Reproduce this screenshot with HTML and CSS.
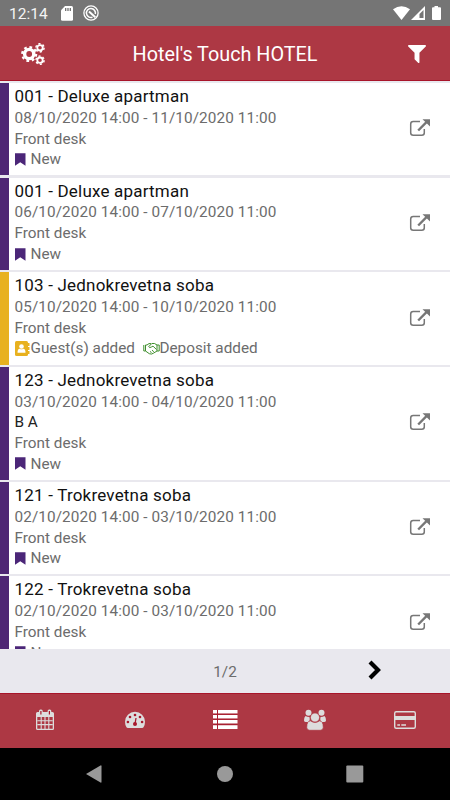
FILE: index.html
```html
<!DOCTYPE html>
<html lang="en">
<head>
<meta charset="utf-8">
<title>Hotel's Touch HOTEL</title>
<link rel="stylesheet" href="styles.css">
</head>
<body>
<svg class="defs" aria-hidden="true">
  <symbol id="open" viewBox="0 0 22 20">
    <path d="M11 3.500H4.200Q1.700 3.500 1.700 6v8.800q0 2.500 2.500 2.500h8.600q2.500 0 2.500-2.500V11" fill="none" stroke="#777" stroke-width="1.500"/>
    <path d="M9.200 12.500L17.500 4.200" stroke="#777" stroke-width="2.400"/>
    <path d="M13.500 1.300H21v7.200z" fill="#777"/>
  </symbol>
  <symbol id="bookmark" viewBox="0 0 11 13"><path d="M0 .2h10.500v12.600L5.250 9.300 0 12.800z" fill="#4b2678"/></symbol>
  <symbol id="guest" viewBox="0 0 15 15">
    <rect width="13" height="15" rx="1.500" fill="#e8b11f"/>
    <path d="M13 2h1.500v3H13zM13 6h1.500v3H13zM13 10h1.500v3H13z" fill="#e8b11f"/>
    <circle cx="6.500" cy="5.500" r="2.300" fill="#fff"/><path d="M2.500 11.700q0-4 2.300-4 1.700 1.200 3.400 0 2.300 0 2.300 4z" fill="#fff"/>
  </symbol>
  <symbol id="hands" viewBox="0 0 17 13">
    <path d="M.8 3v6h1.700l3.800 2.700q2.300 1 4.300-.6L14 9h2.200V3H14l-2.500-1.500H8.800L5.700 4.700q.8 1.700 2.900.2l1.400-.8 3.500 3.500M2.500 3H4l2-1.400h2M2.500 3v6M14 3v6M7 9.500l1.500 1M9 8.200l1.800 1.500" fill="none" stroke="#3e8e2c" stroke-width="1"/>
  </symbol>
</svg>
<div class="screen">
  <div class="status">
    <span class="clock">12:14</span>
    <svg class="sd" viewBox="0 0 12 15"><path d="M4 0h6.500Q12 0 12 1.500v12q0 1.300-1.500 1.300h-9Q0 14.800 0 13.500V4.200z" fill="#fff"/><path d="M4.700 2v3M7 2v3M9.300 2v3" stroke="#666" stroke-width="1.200"/></svg>
    <svg class="sync" viewBox="0 0 16 16"><g fill="none" stroke="#fff"><circle cx="8" cy="8" r="7.100" stroke-width="1.300"/><path d="M9.500 12.200A4.500 4.500 0 1 1 12.300 9" stroke-width="1.500"/><path d="M6 6.500L12.300 12.300" stroke-width="2"/></g></svg>
    <span class="grow"></span>
    <svg class="signals" viewBox="0 0 50 15">
      <path d="M0 3.300Q8.500-3 17 3.300L8.500 14z" fill="#fff"/>
      <path d="M32 0v14H18z" fill="#fff"/><path d="M30.500 4v8h-4V8z" fill="#757575"/>
      <path d="M41.500 0h3.500v1.300h2q1 0 1 1V13q0 1-1 1h-7q-1 0-1-1V2.300q0-1 1-1h1.500z" fill="#fff"/>
    </svg>
  </div>
  <header class="header">
    <svg class="cogs" viewBox="0 0 24 22" fill="none" stroke="#fff">
      <circle cx="8.200" cy="11" r="4.600" stroke-width="3.400"/><circle cx="8.200" cy="11" r="7" stroke-width="2.200" stroke-dasharray="2.750 2.750"/>
      <circle cx="19" cy="4.800" r="2.700" stroke-width="1.800"/><circle cx="19" cy="4.800" r="4.100" stroke-width="1.500" stroke-dasharray="2.150 2.150"/>
      <circle cx="19" cy="17.200" r="2.700" stroke-width="1.800"/><circle cx="19" cy="17.200" r="4.100" stroke-width="1.500" stroke-dasharray="2.150 2.150"/>
    </svg>
    <h1 class="title">Hotel's Touch HOTEL</h1>
    <svg class="filter" viewBox="192 256 1408 1408"><path d="M1595 295q17 41-14 70l-493 493v742q0 42-39 59-13 5-25 5-27 0-45-19l-256-256q-19-19-19-45v-486l-493-493q-31-29-14-70 17-39 59-39h1280q42 0 59 39z" fill="#fff"/></svg>
  </header>
  <main class="list">
    <article class="row">
      <div class="info"><h2 class="name">001 - Deluxe apartman</h2><p class="dates">08/10/2020 14:00 - 11/10/2020 11:00</p><p class="desk">Front desk</p><p class="state"><svg class="mark"><use href="#bookmark"/></svg><span>New</span></p></div>
      <svg class="open"><use href="#open"/></svg>
    </article>
    <article class="row">
      <div class="info"><h2 class="name">001 - Deluxe apartman</h2><p class="dates">06/10/2020 14:00 - 07/10/2020 11:00</p><p class="desk">Front desk</p><p class="state"><svg class="mark"><use href="#bookmark"/></svg><span>New</span></p></div>
      <svg class="open"><use href="#open"/></svg>
    </article>
    <article class="row gold">
      <div class="info"><h2 class="name">103 - Jednokrevetna soba</h2><p class="dates">05/10/2020 14:00 - 10/10/2020 11:00</p><p class="desk">Front desk</p><p class="state"><svg class="guest"><use href="#guest"/></svg><span class="added">Guest(s) added</span><svg class="hands"><use href="#hands"/></svg><span class="deposit">Deposit added</span></p></div>
      <svg class="open"><use href="#open"/></svg>
    </article>
    <article class="row">
      <div class="info"><h2 class="name">123 - Jednokrevetna soba</h2><p class="dates">03/10/2020 14:00 - 04/10/2020 11:00</p><p class="person">B A</p><p class="desk">Front desk</p><p class="state"><svg class="mark"><use href="#bookmark"/></svg><span>New</span></p></div>
      <svg class="open"><use href="#open"/></svg>
    </article>
    <article class="row">
      <div class="info"><h2 class="name">121 - Trokrevetna soba</h2><p class="dates">02/10/2020 14:00 - 03/10/2020 11:00</p><p class="desk">Front desk</p><p class="state"><svg class="mark"><use href="#bookmark"/></svg><span>New</span></p></div>
      <svg class="open"><use href="#open"/></svg>
    </article>
    <article class="row">
      <div class="info"><h2 class="name">122 - Trokrevetna soba</h2><p class="dates">02/10/2020 14:00 - 03/10/2020 11:00</p><p class="desk">Front desk</p><p class="state"><svg class="mark"><use href="#bookmark"/></svg><span>New</span></p></div>
      <svg class="open"><use href="#open"/></svg>
    </article>
  </main>
  <div class="pager">
    <span></span><span class="count">1/2</span>
    <svg class="next" viewBox="0 0 14 20"><path d="M2 2l8 8-8 8" fill="none" stroke="#000" stroke-width="4.200"/></svg>
  </div>
  <nav class="tabs">
    <svg viewBox="0 0 30 24"><g fill="#ddd"><path fill-rule="evenodd" d="M6 5.500Q6 4 7.500 4h15Q24 4 24 5.500v15q0 1.500-1.500 1.500h-15Q6 22 6 20.500zM7.300 9v11.700h15.400V9z"/><rect x="9" y="1.500" width="3.700" height="6" rx="1.500"/><rect x="17.600" y="1.500" width="3.700" height="6" rx="1.500"/></g><path d="M10.900 3v3.500M19.400 3v3.500" stroke="#a8182c" stroke-width="1.200"/><path d="M7.300 12.800h15.400M7.300 16.600h15.400M11.200 9v12M15 9v12M18.800 9v12" stroke="#ddd" stroke-width="1.100"/></svg>
    <svg viewBox="0 0 30 24"><path d="M5 13.700a10 10 0 0 1 20 0q0 3.300-1.500 5.600-.5.800-1.300.8H7.800q-.8 0-1.300-.8Q5 17 5 13.700z" fill="#ddd"/><g fill="#a8182c"><circle cx="7.900" cy="14" r="1.300"/><circle cx="10" cy="9" r="1.300"/><circle cx="15" cy="7" r="1.300"/><circle cx="20" cy="9" r="1.300"/><circle cx="22.100" cy="14" r="1.300"/><circle cx="15" cy="16" r="2"/></g><path d="M15 16l1-6" stroke="#a8182c" stroke-width="1.300"/></svg>
    <svg viewBox="0 0 30 24" fill="#fff"><path d="M3 2h4v3.500H3zM8 2h19.500v3.500H8zM3 7h4v3.500H3zM8 7h19.500v3.500H8zM3 12h4v3.500H3zM8 12h19.500v3.500H8zM3 17.300h4V21H3zM8 17.300h19.500V21H8z"/><path d="M3 6.300h24.500M3 11.300h24.500M3 16.400h24.500M7.500 2v19" stroke="#a8182c" stroke-width=".8"/></svg>
    <svg viewBox="0 0 30 24" fill="#ddd"><circle cx="8.500" cy="4.800" r="3"/><circle cx="21.500" cy="4.800" r="3"/><path d="M5.500 8Q4 9 4 12.500 4.200 14 6 14h3.500q.5-3 0-5Q7 9 5.500 8zM24.500 8q1.500 1 1.500 4.500-.2 1.500-2 1.500h-3.500q-.5-3 0-5 2.500 0 4-1z"/><g stroke="#ad3844" stroke-width=".8"><path d="M10.500 12.800q2 1.500 4.500 1.500t4.500-1.500q3.800.2 3.800 6.500 0 3-3 3h-10.600q-3 0-3-3 0-6.300 3.800-6.500z"/><circle cx="15" cy="9.500" r="4.600"/></g></svg>
    <svg viewBox="0 0 30 24"><rect x="4.700" y="3.700" width="20.600" height="16.600" rx="1.500" fill="none" stroke="#ddd" stroke-width="1.400"/><path d="M5 8h20v4H5zM7.300 16.300h2.700v1.400H7.300zM11.300 16.300H16v1.400h-4.700z" fill="#ddd"/></svg>
  </nav>
  <footer class="system">
    <svg viewBox="0 0 20 20"><path d="M1 10L15.500 1.500q1-.5 1 .7v15.600q0 1.200-1 .7z" fill="#999"/></svg>
    <svg viewBox="0 0 20 20"><circle cx="10" cy="10" r="8" fill="#999"/></svg>
    <svg viewBox="0 0 20 20"><rect x="1.300" y="1.500" width="17" height="17" rx="1" fill="#999"/></svg>
  </footer>
</div>
</body>
</html>
```
FILE: styles.css
```css
* { box-sizing: border-box; }
body, h1, h2, p { margin: 0; font-weight: 400; }
body { font-family: Roboto, sans-serif; background: #fff; }
svg { display: block; flex: none; }
.defs { position: absolute; width: 0; height: 0; }
.screen { display: flex; flex-direction: column; width: 450px; height: 800px; overflow: hidden; }
.status { flex: none; height: 26px; display: flex; align-items: center; padding: 0 8px 0 9px; background: #757575; color: #f4f4f4; }
.clock { width: 52px; font-size: 15.500px; line-height: 26px; padding-top: 1px; }
.sd { width: 12px; height: 15px; }
.sync { width: 16px; height: 16px; margin-left: 10px; }
.grow { flex: 1; }
.signals { width: 50px; height: 15px; margin-right: -1px; }
.header { flex: none; height: 55px; display: flex; align-items: center; justify-content: space-between; padding: 2px 24px 0 21px; background: #ad3844; border-bottom: 1px solid #a8142a; color: #fff; }
.cogs { width: 24px; height: 22px; }
.title { font-size: 19.800px; line-height: 26px; padding-top: 1px; margin-left: -3px; }
.filter { width: 18px; height: 18px; }
.list { flex: none; height: 568px; overflow: hidden; padding-top: 2px; background: #e9e8ee; display: flex; flex-direction: column; gap: 2.200px; }
.row { flex: none; display: flex; align-items: center; justify-content: space-between; padding: 1px 19px 5.500px 5.500px; border-left: 9px solid #4e2674; background: #fff; }
.gold { border-left-color: #e8b11f; }
.name { font-size: 17px; line-height: 24px; color: #111; height: 23.900px; letter-spacing: .2px; }
.dates, .desk, .state { color: #6c6c6c; }
.dates, .desk, .state, .person { font-size: 15.300px; line-height: 20.500px; height: 20.600px; }
.dates { height: 20.800px; letter-spacing: .1px; }
.person { color: #222; }
.state { display: flex; align-items: center; }
.mark { width: 11px; height: 13px; margin-right: 5px; }
.guest { width: 15px; height: 15px; margin-right: 1px; }
.hands { width: 17px; height: 13px; margin-left: 8px; }
.deposit { margin-left: -.5px; }
.open { width: 22px; height: 20px; margin-top: 3px; }
.pager { flex: none; height: 44px; display: grid; grid-template-columns: 1fr auto 1fr; align-items: center; background: #e9e8ee; color: #6c6c6c; }
.count { font-size: 15.300px; padding-top: 1px; }
.next { width: 14px; height: 20px; margin-left: 131px; margin-top: -2px; }
.tabs { flex: none; height: 55px; display: grid; grid-template-columns: repeat(5, 1fr); justify-items: center; align-items: center; padding-bottom: 2px; background: #ad3844; border-top: 1px solid #a8142a; }
.tabs svg { width: 30px; height: 24px; }
.system { flex: none; height: 52px; display: flex; align-items: center; justify-content: center; gap: 110px; background: #000; }
.system svg { width: 20px; height: 20px; }
```
